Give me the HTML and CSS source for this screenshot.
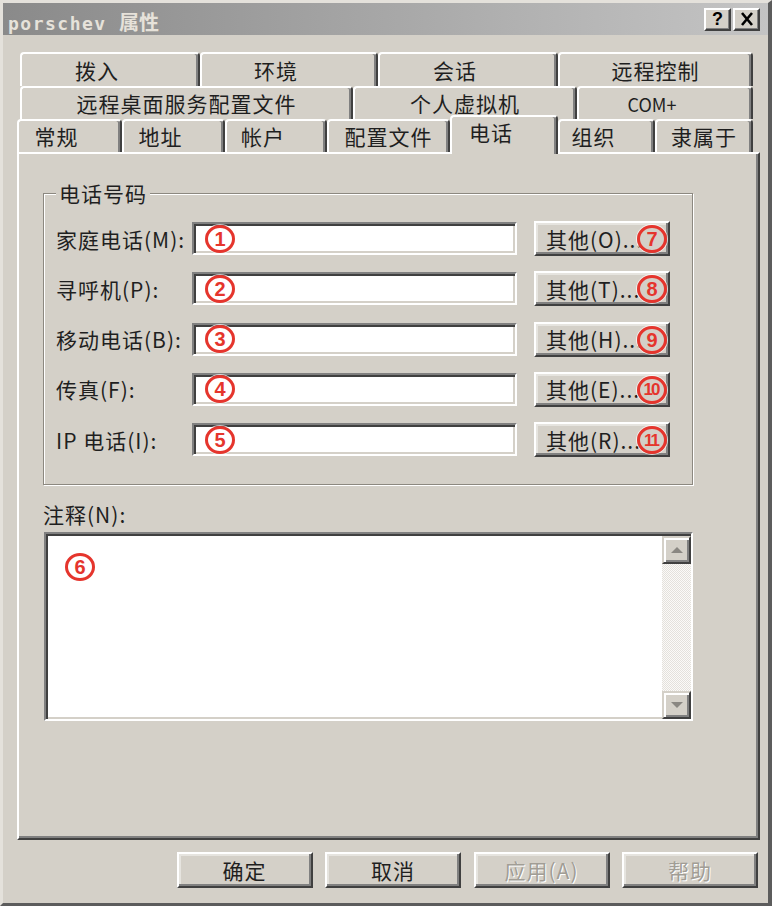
FILE: index.html
```html
<!DOCTYPE html>
<html lang="zh-CN">

<head>
  <meta charset="UTF-8">
  <title>porschev 属性</title>
  <link rel="stylesheet" href="styles.css">
</head>

<body>
  <div class="window">
    <div class="titlebar">
      <span class="title">porschev <span class="title-cn">属性</span></span>
      <div class="caption-btns">
        <span class="cap-btn">?</span>
        <span class="cap-btn">
          <svg width="14" height="14" viewBox="0 0 14 14"><path d="M2 1 L12 13 M12 1 L2 13" stroke="#000" stroke-width="2.6" fill="none"/></svg>
        </span>
      </div>
    </div>

    <div class="dialog">
      <!-- 三排标签页 -->
      <div class="tabs">
        <div class="tab-row r1">
          <div class="tab short">拨入</div>
          <div class="tab short">环境</div>
          <div class="tab short">会话</div>
          <div class="tab">远程控制</div>
        </div>
        <div class="tab-row r2">
          <div class="tab">远程桌面服务配置文件</div>
          <div class="tab">个人虚拟机</div>
          <div class="tab short latin">COM+</div>
        </div>
        <div class="tab-row r3">
          <div class="tab short">常规</div>
          <div class="tab short">地址</div>
          <div class="tab short">帐户</div>
          <div class="tab">配置文件</div>
          <div class="tab short on">电话</div>
          <div class="tab short">组织</div>
          <div class="tab">隶属于</div>
        </div>
      </div>

      <div class="panel">
        <fieldset class="group">
          <legend>电话号码</legend>
          <div class="phones">
            <div class="phone-row">
              <label>家庭电话(M):</label>
              <div class="field"><span class="mark">1</span></div>
              <button type="button" class="btn other">其他(O)...<span class="mark">7</span></button>
            </div>
            <div class="phone-row">
              <label>寻呼机(P):</label>
              <div class="field"><span class="mark">2</span></div>
              <button type="button" class="btn other">其他(T)...<span class="mark">8</span></button>
            </div>
            <div class="phone-row">
              <label>移动电话(B):</label>
              <div class="field"><span class="mark">3</span></div>
              <button type="button" class="btn other">其他(H)...<span class="mark">9</span></button>
            </div>
            <div class="phone-row">
              <label>传真(F):</label>
              <div class="field"><span class="mark">4</span></div>
              <button type="button" class="btn other">其他(E)...<span class="mark wide">10</span></button>
            </div>
            <div class="phone-row">
              <label>IP 电话(I):</label>
              <div class="field"><span class="mark">5</span></div>
              <button type="button" class="btn other">其他(R)...<span class="mark wide">11</span></button>
            </div>
          </div>
        </fieldset>

        <div class="note-label">注释(N):</div>
        <div class="memo">
          <div class="memo-text"><span class="mark">6</span></div>
          <div class="scrollbar">
            <div class="sb-btn">
              <svg width="14" height="8" viewBox="0 0 14 8"><path d="M1 7 L7 1 L13 7 Z" fill="#8a8782"/></svg>
            </div>
            <div class="sb-track"></div>
            <div class="sb-btn">
              <svg width="14" height="8" viewBox="0 0 14 8"><path d="M1 1 L7 7 L13 1 Z" fill="#8a8782"/></svg>
            </div>
          </div>
        </div>
      </div>

      <div class="actions">
        <button type="button" class="btn">确定</button>
        <button type="button" class="btn">取消</button>
        <button type="button" class="btn off">应用(A)</button>
        <button type="button" class="btn off">帮助</button>
      </div>
    </div>
  </div>
</body>

</html>
```

FILE: styles.css
```css
* {
  box-sizing: border-box;
}

body {
  margin: 0;
  background: #d4d0c8;
  font-family: "Noto Sans CJK SC", "Liberation Sans", sans-serif;
  color: #1f1f1f;
}

.window {
  width: 772px;
  height: 906px;
  display: flex;
  flex-direction: column;
  background: #d4d0c8;
  border-style: solid;
  border-width: 3px 4px 3px 3px;
  border-color: #e4e1db #5c5c5c #5c5c5c #e4e1db;
}

/* 标题栏 */
.titlebar {
  flex: none;
  height: 32px;
  display: flex;
  align-items: center;
  justify-content: space-between;
  padding: 0 8px 0 5px;
  background: linear-gradient(to right, #8a8a8a, #c4c4c4);
}

.title {
  font: bold 18px "DejaVu Sans Mono", "Noto Sans CJK SC", monospace;
  letter-spacing: 1.5px;
  color: #e6e2da;
  padding-top: 4px;
}

.title-cn {
  font-size: 20px;
  letter-spacing: 0;
}

.caption-btns {
  display: flex;
  gap: 2px;
}

.cap-btn {
  width: 27px;
  height: 23px;
  display: flex;
  align-items: center;
  justify-content: center;
  background: #d4d0c8;
  border: 2px solid;
  border-color: #fff #404040 #404040 #fff;
  box-shadow: inset -1px -1px #808080;
  font: bold 18px "Liberation Sans", sans-serif;
  color: #000;
}

.dialog {
  flex: 1;
  padding: 17px 8px 0 14px;
}

/* 标签页 */
.tabs {
  display: flex;
  flex-direction: column;
}

.tab-row {
  display: grid;
  height: 33px;
}

.tab-row.r1 {
  height: 34px;
  margin-left: 3px;
  grid-template-columns: 180px 178px 180px 195px;
}

.tab-row.r2 {
  margin-left: 3px;
  grid-template-columns: 333px 224px 176px;
}

.tab-row.r3 {
  grid-template-columns: 105px 103px 102px 123px 108px 97px 98px;
}

.tab {
  display: flex;
  align-items: center;
  justify-content: center;
  font-size: 21px;
  letter-spacing: 1px;
  line-height: 1;
  background: #d4d0c8;
  border: 2px solid;
  border-bottom: 0;
  border-color: #fff #404040 transparent #fff;
  border-radius: 4px 4px 0 0;
  box-shadow: inset -2px 0 #808080;
}

.tab.short {
  padding-right: 26px;
}

.tab.latin {
  font-size: 18px;
  letter-spacing: 0;
}

.tab.on {
  position: relative;
  z-index: 1;
  margin: -4px 0 -2px;
  padding-bottom: 6px;
}

.panel {
  height: 688px;
  border: 2px solid;
  border-color: #fff #404040 #404040 #fff;
  box-shadow: inset -2px -2px #808080;
  padding: 27px 0 0 24px;
}

/* 电话号码分组框 */
.group {
  width: 650px;
  margin: 0;
  padding: 16px 21px 27px 12px;
  border: 1px solid #8c8880;
  box-shadow: inset 1px 1px #fff, 1px 1px #fff;
}

.group legend {
  padding: 0 3px;
  font-size: 21px;
  line-height: 24px;
  letter-spacing: 1px;
  background: #d4d0c8;
}

.phones {
  display: flex;
  flex-direction: column;
  gap: 15.25px;
}

.phone-row {
  display: flex;
  align-items: center;
  height: 35px;
}

.phone-row label {
  width: 136px;
  font-size: 21px;
  line-height: 24px;
  letter-spacing: 1px;
}

.field {
  width: 325px;
  height: 33px;
  display: flex;
  align-items: center;
  padding-left: 11px;
  background: #fff;
  border: 2px solid;
  border-color: #808080 #fff #fff #808080;
  box-shadow: inset 2px 2px #404040, inset -2px -2px #d4d0c8;
}

.btn {
  padding: 0;
  background: #d4d0c8;
  border: 2px solid;
  border-color: #fff #404040 #404040 #fff;
  box-shadow: inset -2px -2px #808080, inset 2px 2px #e6e4df;
  font: 21px "Noto Sans CJK SC", sans-serif;
  letter-spacing: 1px;
  color: #1f1f1f;
}

.btn.off {
  color: #a19d95;
  text-shadow: 1px 1px #fff;
}

.other {
  position: relative;
  width: 136px;
  height: 35px;
  margin-left: 17px;
  padding-left: 10px;
  text-align: left;
}

/* 红圈编号 */
.mark {
  display: inline-flex;
  align-items: center;
  justify-content: center;
  width: 30px;
  height: 28px;
  border: 3px solid #e5352d;
  border-radius: 50%;
  color: #e5352d;
  font: bold 20px "Liberation Sans", sans-serif;
  line-height: 1;
  letter-spacing: 0;
  box-shadow: 0 0 0 1px rgba(255, 255, 255, 0.7);
}

.mark.wide {
  font-size: 17px;
  letter-spacing: -2px;
  text-indent: -2px;
}

.other .mark {
  position: absolute;
  right: 1px;
  top: 2px;
}

.note-label {
  margin-top: 17px;
  font-size: 21px;
  line-height: 24px;
  letter-spacing: 1px;
}

.memo {
  display: flex;
  width: 649px;
  height: 189px;
  margin: 6px 0 0 1px;
  padding: 2px 0 0 2px;
  background: #fff;
  border: 2px solid;
  border-color: #808080 #fff #fff #808080;
  box-shadow: inset 2px 2px #404040, inset -2px -2px #d4d0c8;
}

.memo-text {
  flex: 1;
  padding: 17px 0 0 17px;
}

.scrollbar {
  width: 29px;
  display: flex;
  flex-direction: column;
}

.sb-btn {
  height: 28px;
  display: flex;
  align-items: center;
  justify-content: center;
  background: #d4d0c8;
  border: 2px solid;
  border-color: #d4d0c8 #404040 #404040 #d4d0c8;
  box-shadow: inset 2px 2px #fff, inset -2px -2px #808080;
}

.sb-track {
  flex: 1;
  background: repeating-conic-gradient(#fbfaf8 0 25%, #e4e1dc 0 50%) 0 0 / 2px 2px;
}

.actions {
  display: flex;
  justify-content: flex-end;
  gap: 12.5px;
  margin-top: 12px;
  padding-right: 2px;
}

.actions .btn {
  width: 136px;
  height: 36px;
}
```
